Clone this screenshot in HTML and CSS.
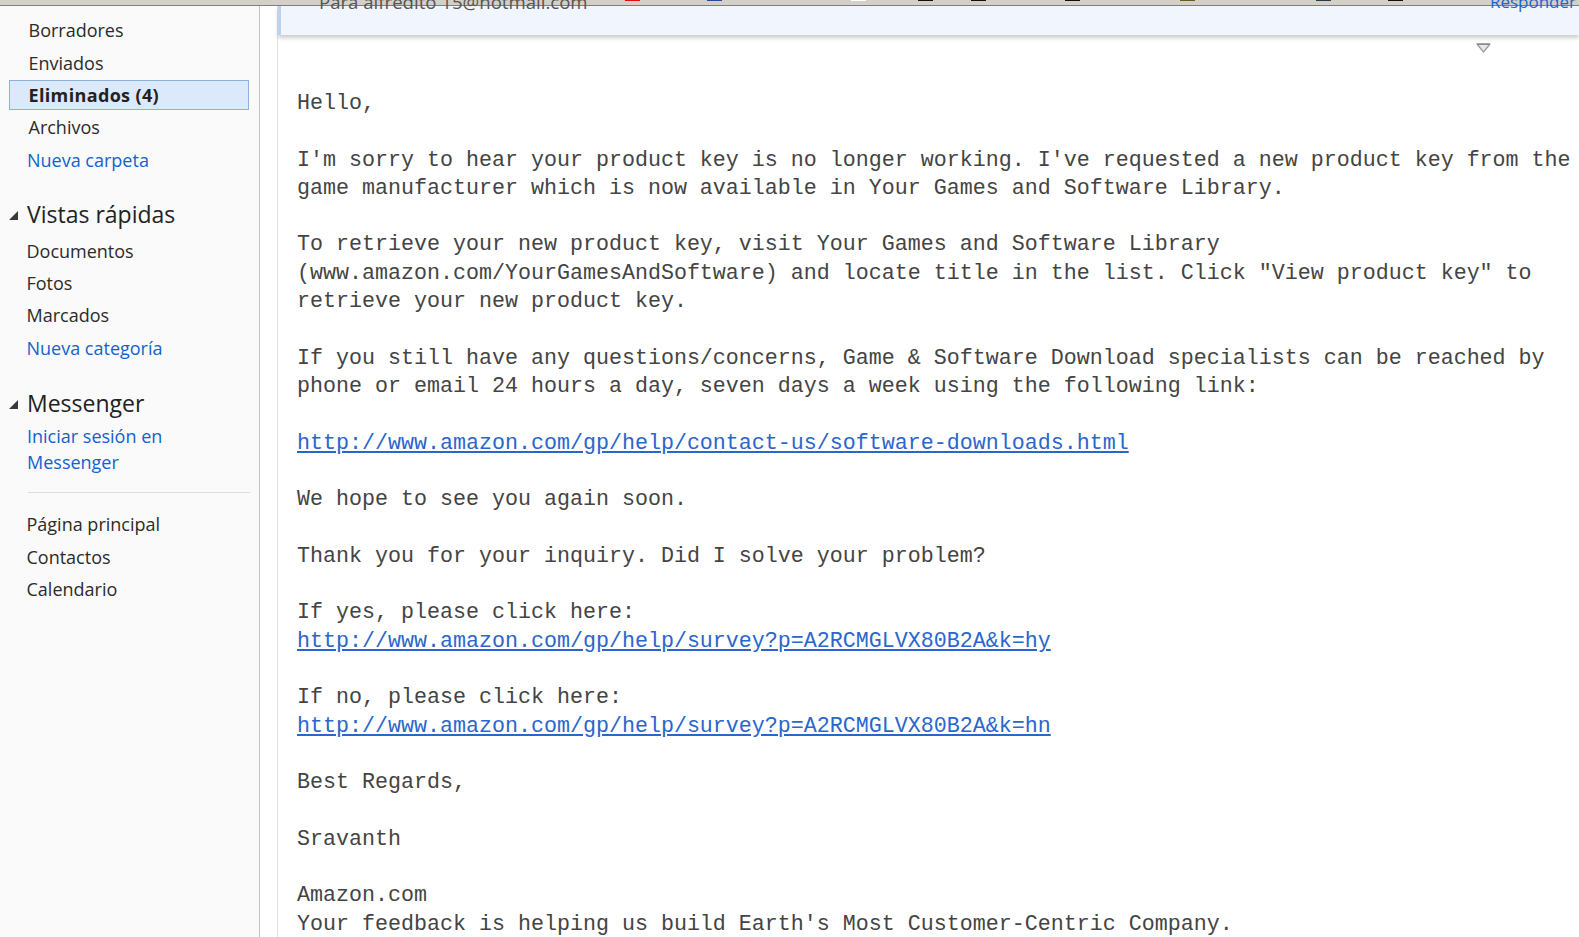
FILE: index.html
```html
<!DOCTYPE html>
<html lang="es">
<head>
<meta charset="utf-8">
<title>Hotmail - Eliminados</title>
<link rel="stylesheet" href="styles.css">
</head>
<body>
<div class="topstrip">
  <span class="tick red t1"></span>
  <span class="tick blue t2"></span>
  <span class="tick white t3"></span>
  <span class="tick black t4"></span>
  <span class="tick black t5"></span>
  <span class="tick black t6"></span>
  <span class="tick olive t7"></span>
  <span class="tick dark t8"></span>
  <span class="tick black t9"></span>
</div>
<div class="layout">
  <aside class="sidebar">
    <ul class="nav">
      <li class="item"><span>Borradores</span></li>
      <li class="item"><span>Enviados</span></li>
      <li class="item selected"><span>Eliminados (4)</span></li>
      <li class="item"><span>Archivos</span></li>
      <li class="item link nudge"><span>Nueva carpeta</span></li>
    </ul>
    <h2 class="heading">
      <svg class="tri" width="9" height="9" viewBox="0 0 9 9"><polygon points="9,0 9,9 0,9" fill="#3a3a3a"/></svg>
      <span>Vistas rápidas</span>
    </h2>
    <ul class="nav sub">
      <li class="item"><span>Documentos</span></li>
      <li class="item"><span>Fotos</span></li>
      <li class="item"><span>Marcados</span></li>
      <li class="item link"><span>Nueva categoría</span></li>
    </ul>
    <h2 class="heading">
      <svg class="tri" width="9" height="9" viewBox="0 0 9 9"><polygon points="9,0 9,9 0,9" fill="#3a3a3a"/></svg>
      <span>Messenger</span>
    </h2>
    <div class="messenger-link">Iniciar sesión en<br>Messenger</div>
    <hr class="sep">
    <ul class="nav sub">
      <li class="item"><span>Página principal</span></li>
      <li class="item"><span>Contactos</span></li>
      <li class="item"><span>Calendario</span></li>
    </ul>
  </aside>
  <div class="gutter"></div>
  <main class="content">
    <div class="mailhead">
      <span class="to">Para alfredito 15@hotmail.com</span>
      <span class="reply">Responder</span>
    </div>
    <div class="toolrow">
      <svg width="15" height="10" viewBox="0 0 15 10"><polygon points="1,1 14,1 7.5,9" fill="#e8e8e8" stroke="#9a9a9a" stroke-width="1.2" stroke-linejoin="round"/><line x1="1" y1="1.2" x2="14" y2="1.2" stroke="#8c8c8c" stroke-width="1.6"/></svg>
    </div>
<pre class="mailbody">Hello,

I'm sorry to hear your product key is no longer working. I've requested a new product key from the
game manufacturer which is now available in Your Games and Software Library.

To retrieve your new product key, visit Your Games and Software Library
(www.amazon.com/YourGamesAndSoftware) and locate title in the list. Click "View product key" to
retrieve your new product key.

If you still have any questions/concerns, Game &amp; Software Download specialists can be reached by
phone or email 24 hours a day, seven days a week using the following link:

<a href="#">http://www.amazon.com/gp/help/contact-us/software-downloads.html</a>

We hope to see you again soon.

Thank you for your inquiry. Did I solve your problem?

If yes, please click here:
<a href="#">http://www.amazon.com/gp/help/survey?p=A2RCMGLVX80B2A&amp;k=hy</a>

If no, please click here:
<a href="#">http://www.amazon.com/gp/help/survey?p=A2RCMGLVX80B2A&amp;k=hn</a>

Best Regards,

Sravanth

Amazon.com
Your feedback is helping us build Earth's Most Customer-Centric Company.
</pre>
  </main>
</div>
</body>
</html>
```
FILE: styles.css
```css
html, body {
  margin: 0;
  padding: 0;
  height: 937px;
  overflow: hidden;
  background: #ffffff;
}

body {
  font-family: "Open Sans", "Noto Sans", "Liberation Sans", sans-serif;
  color: #2b2b2b;
}

.topstrip {
  height: 5px;
  background: #d4d0c8;
  border-bottom: 1px solid #808080;
  display: flex;
  align-items: flex-start;
}

.tick {
  height: 1px;
  width: 15px;
  flex: none;
}
.red { background: #e01010; }
.blue { background: #2a4a9a; }
.white { background: #ffffff; }
.black { background: #111111; }
.olive { background: #6b5a20; }
.dark { background: #2a3a4a; }
.t1 { margin-left: 625px; }
.t2 { margin-left: 67px; }
.t3 { margin-left: 129px; }
.t4 { margin-left: 52px; }
.t5 { margin-left: 38px; }
.t6 { margin-left: 79px; }
.t7 { margin-left: 100px; }
.t8 { margin-left: 121px; }
.t9 { margin-left: 57px; }

.layout {
  display: flex;
  height: 931px;
}

.sidebar {
  width: 259px;
  flex: none;
  background: #fafafa;
  border-right: 1px solid #c4c4c4;
  padding-top: 8px;
  box-sizing: content-box;
}

.nav {
  list-style: none;
  margin: 0;
  padding: 0;
}

.item {
  height: 32.35px;
  box-sizing: border-box;
  margin: 0 9px;
  padding-left: 18.5px;
  border: 1px solid transparent;
  display: flex;
  align-items: center;
  font-size: 18px;
  color: #2b2b2b;
}

.item.selected {
  height: 29.5px;
  margin: 1.45px 10px 1.45px 9px;
  background: #dce9fb;
  border-color: #8db0de;
  font-weight: 700;
  letter-spacing: 0.35px;
  color: #222;
}

.nav.sub .item {
  padding-left: 16.5px;
}

.item.link {
  color: #1262cc;
}

.item.nudge {
  padding-left: 17px;
}

.heading {
  margin: 18.7px 0 0 0;
  height: 40px;
  padding-left: 9px;
  display: flex;
  align-items: center;
  gap: 9px;
  font-size: 23px;
  font-weight: 400;
  color: #222;
}

.tri {
  flex: none;
  margin-top: 3px;
}

.messenger-link {
  margin: 0 0 0 27px;
  padding-top: 1.8px;
  font-size: 18px;
  line-height: 25.2px;
  color: #1262cc;
}

.sep {
  margin: 17.3px 9px 15px 28px;
  border: 0;
  height: 1px;
  background: #dddddd;
}

.gutter {
  width: 17px;
  flex: none;
  background: #ffffff;
}

.content {
  flex: 1;
  min-width: 0;
  border-left: 1px solid #e2e2e2;
  display: flex;
  flex-direction: column;
  overflow: visible;
}

.content > * {
  flex: none;
}

.mailhead {
  height: 29px;
  background: #f1f5fd;
  border-left: 3px solid #b6d2f6;
  box-shadow: 0 3px 4px rgba(0, 0, 0, 0.2);
  display: flex;
  justify-content: space-between;
  align-items: flex-start;
  position: relative;
}

.to {
  margin-top: -14px;
  margin-left: 38px;
  font-size: 18.6px;
  line-height: 20px;
  color: #555555;
}

.reply {
  margin-top: -14px;
  margin-right: 3px;
  font-size: 17px;
  line-height: 20px;
  color: #1a66d0;
}

.toolrow {
  display: flex;
  justify-content: flex-end;
  padding-right: 88px;
  margin-top: 8px;
  height: 10px;
}

.mailbody {
  margin: 37px 0 0 0;
  padding-left: 19px;
  font-family: "Liberation Mono", "Courier New", monospace;
  font-size: 21.67px;
  line-height: 28.3px;
  color: #444444;
  white-space: pre;
}

.mailbody a {
  color: #2a66cc;
  text-decoration: underline;
}
```
